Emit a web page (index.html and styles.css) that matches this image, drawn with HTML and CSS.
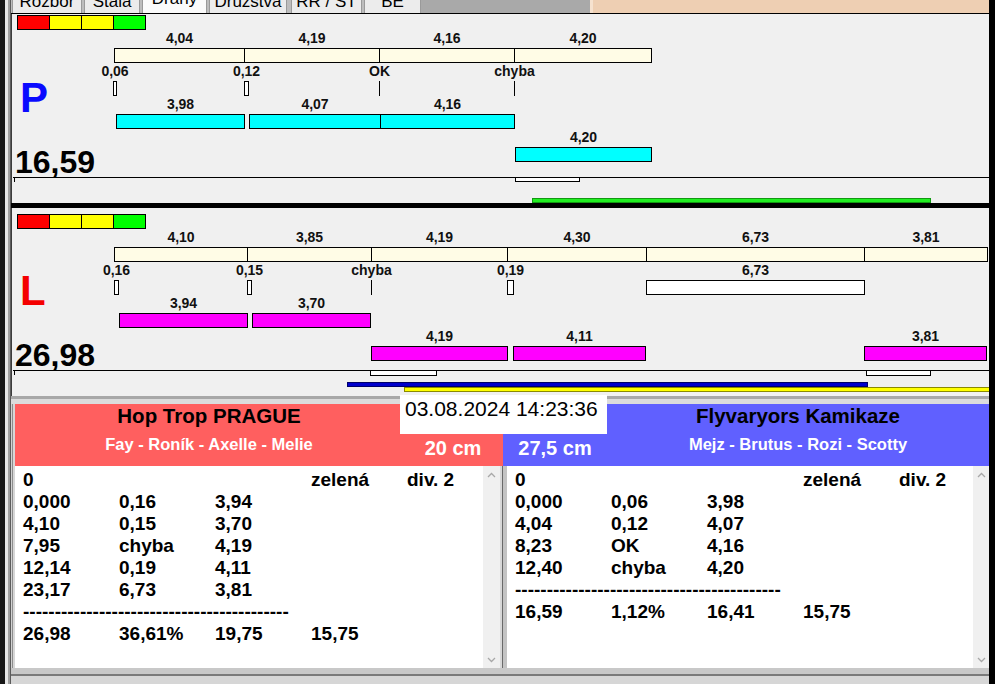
FILE: index.html
```html
<!DOCTYPE html>
<html lang="cs">
<head>
<meta charset="utf-8">
<title>Dráhy</title>
<link rel="stylesheet" href="styles.css">
</head>
<body>
<div class="screen">
  <div class="edge-left"></div>
  <div class="main">
    <nav class="tabbar">
      <div class="tab tab-1"><span>Rozbor</span></div>
      <div class="tab tab-2"><span>Stala</span></div>
      <div class="tab tab-3 tab-on"><span>Dráhy</span></div>
      <div class="tab tab-4"><span>Družstva</span></div>
      <div class="tab tab-5"><span>RR / ST</span></div>
      <div class="tab tab-6"><span>BE</span></div>
      <div class="tab-gap"></div>
      <div class="tab-fill"></div>
    </nav>

    <section class="lane lane-p">
      <div class="legend"><span class="lg lg-red"></span><span class="lg lg-yellow"></span><span class="lg lg-yellow"></span><span class="lg lg-green"></span></div>
      <div class="timeline">
        <div class="side">
          <div class="letter letter-p">P</div>
          <div class="total">16,59</div>
        </div>
        <div class="tracks">
          <div class="track">
            <div class="item" style="left:0px;width:131px"><span class="lbl">4,04</span><span class="bar bar-cream"></span></div>
            <div class="item" style="left:130px;width:136px"><span class="lbl">4,19</span><span class="bar bar-cream"></span></div>
            <div class="item" style="left:265px;width:136px"><span class="lbl">4,16</span><span class="bar bar-cream"></span></div>
            <div class="item" style="left:400px;width:138px"><span class="lbl">4,20</span><span class="bar bar-cream"></span></div>
          </div>
          <div class="track">
            <div class="item" style="left:-1px;width:4px"><span class="lbl">0,06</span><span class="bar bar-gap"></span></div>
            <div class="item" style="left:130px;width:5px"><span class="lbl">0,12</span><span class="bar bar-gap"></span></div>
            <div class="item" style="left:265px;width:1px"><span class="lbl">OK</span><span class="bar bar-line"></span></div>
            <div class="item" style="left:400px;width:1px"><span class="lbl">chyba</span><span class="bar bar-line"></span></div>
          </div>
          <div class="track">
            <div class="item" style="left:2px;width:129px"><span class="lbl">3,98</span><span class="bar bar-cyan"></span></div>
            <div class="item" style="left:135px;width:132px"><span class="lbl">4,07</span><span class="bar bar-cyan"></span></div>
            <div class="item" style="left:266px;width:135px"><span class="lbl">4,16</span><span class="bar bar-cyan"></span></div>
          </div>
          <div class="track">
            <div class="item" style="left:401px;width:137px"><span class="lbl">4,20</span><span class="bar bar-cyan"></span></div>
          </div>
        </div>
      </div>
      <div class="base">
        <span class="base-line"></span>
        <span class="tick"></span>
        <span class="run run-white" style="left:503px;width:65px"></span>
        <span class="run run-green" style="left:520px;width:399px"></span>
      </div>
    </section>

    <div class="lane-sep"></div>

    <section class="lane lane-l">
      <div class="legend"><span class="lg lg-red"></span><span class="lg lg-yellow"></span><span class="lg lg-yellow"></span><span class="lg lg-green"></span></div>
      <div class="timeline">
        <div class="side">
          <div class="letter letter-l">L</div>
          <div class="total">26,98</div>
        </div>
        <div class="tracks">
          <div class="track">
            <div class="item" style="left:0px;width:134px"><span class="lbl">4,10</span><span class="bar bar-cream"></span></div>
            <div class="item" style="left:133px;width:125px"><span class="lbl">3,85</span><span class="bar bar-cream"></span></div>
            <div class="item" style="left:257px;width:137px"><span class="lbl">4,19</span><span class="bar bar-cream"></span></div>
            <div class="item" style="left:393px;width:140px"><span class="lbl">4,30</span><span class="bar bar-cream"></span></div>
            <div class="item" style="left:532px;width:219px"><span class="lbl">6,73</span><span class="bar bar-cream"></span></div>
            <div class="item" style="left:750px;width:124px"><span class="lbl">3,81</span><span class="bar bar-cream"></span></div>
          </div>
          <div class="track">
            <div class="item" style="left:0px;width:5px"><span class="lbl">0,16</span><span class="bar bar-gap"></span></div>
            <div class="item" style="left:133px;width:5px"><span class="lbl">0,15</span><span class="bar bar-gap"></span></div>
            <div class="item" style="left:257px;width:1px"><span class="lbl">chyba</span><span class="bar bar-line"></span></div>
            <div class="item" style="left:393px;width:7px"><span class="lbl">0,19</span><span class="bar bar-gap"></span></div>
            <div class="item" style="left:532px;width:219px"><span class="lbl">6,73</span><span class="bar bar-gap"></span></div>
          </div>
          <div class="track">
            <div class="item" style="left:5px;width:129px"><span class="lbl">3,94</span><span class="bar bar-magenta"></span></div>
            <div class="item" style="left:138px;width:119px"><span class="lbl">3,70</span><span class="bar bar-magenta"></span></div>
          </div>
          <div class="track">
            <div class="item" style="left:257px;width:137px"><span class="lbl">4,19</span><span class="bar bar-magenta"></span></div>
            <div class="item" style="left:399px;width:133px"><span class="lbl">4,11</span><span class="bar bar-magenta"></span></div>
            <div class="item" style="left:750px;width:123px"><span class="lbl">3,81</span><span class="bar bar-magenta"></span></div>
          </div>
        </div>
      </div>
      <div class="base">
        <span class="base-line"></span>
        <span class="tick"></span>
        <span class="run run-white run-tall" style="left:358px;width:67px"></span>
        <span class="run run-white run-tall" style="left:854px;width:65px"></span>
        <span class="run run-blue" style="left:335px;width:521px"></span>
        <span class="run run-yellow" style="left:392px;width:585px"></span>
      </div>
    </section>

    <section class="info">
      <div class="info-top"></div>
      <div class="date">03.08.2024 14:23:36</div>
      <div class="heads">
        <div class="head head-red">
          <div class="names">
            <div class="team-name">Hop Trop PRAGUE</div>
            <div class="dogs">Fay - Roník - Axelle - Melie</div>
          </div>
          <div class="height">20 cm</div>
        </div>
        <div class="head head-blue">
          <div class="height">27,5 cm</div>
          <div class="names">
            <div class="team-name">Flyvaryors Kamikaze</div>
            <div class="dogs">Mejz - Brutus - Rozi - Scotty</div>
          </div>
        </div>
      </div>
      <div class="lists">
        <div class="list">
          <div class="list-body">
            <div class="row"><span>0</span><span></span><span></span><span>zelená</span><span>div. 2</span></div>
            <div class="row"><span>0,000</span><span>0,16</span><span>3,94</span></div>
            <div class="row"><span>4,10</span><span>0,15</span><span>3,70</span></div>
            <div class="row"><span>7,95</span><span>chyba</span><span>4,19</span></div>
            <div class="row"><span>12,14</span><span>0,19</span><span>4,11</span></div>
            <div class="row"><span>23,17</span><span>6,73</span><span>3,81</span></div>
            <div class="row"><span class="dash">------------------------------------------</span></div>
            <div class="row"><span>26,98</span><span>36,61%</span><span>19,75</span><span>15,75</span></div>
          </div>
          <div class="scroll scroll-l">
            <svg class="arrow" width="9" height="6" viewBox="0 0 9 6"><path d="M1 5 L4.5 1.5 L8 5" fill="none" stroke="#a8a8a8" stroke-width="1.3"/></svg>
            <svg class="arrow" width="9" height="6" viewBox="0 0 9 6"><path d="M1 1 L4.5 4.5 L8 1" fill="none" stroke="#a8a8a8" stroke-width="1.3"/></svg>
          </div>
        </div>
        <div class="list-sep"></div>
        <div class="list">
          <div class="list-body">
            <div class="row"><span>0</span><span></span><span></span><span>zelená</span><span>div. 2</span></div>
            <div class="row"><span>0,000</span><span>0,06</span><span>3,98</span></div>
            <div class="row"><span>4,04</span><span>0,12</span><span>4,07</span></div>
            <div class="row"><span>8,23</span><span>OK</span><span>4,16</span></div>
            <div class="row"><span>12,40</span><span>chyba</span><span>4,20</span></div>
            <div class="row"><span class="dash">------------------------------------------</span></div>
            <div class="row"><span>16,59</span><span>1,12%</span><span>16,41</span><span>15,75</span></div>
          </div>
          <div class="scroll scroll-r">
            <svg class="arrow" width="9" height="6" viewBox="0 0 9 6"><path d="M1 5 L4.5 1.5 L8 5" fill="none" stroke="#a8a8a8" stroke-width="1.3"/></svg>
            <svg class="arrow" width="9" height="6" viewBox="0 0 9 6"><path d="M1 1 L4.5 4.5 L8 1" fill="none" stroke="#a8a8a8" stroke-width="1.3"/></svg>
          </div>
        </div>
      </div>
      <div class="info-bottom"></div>
    </section>
  </div>
  <div class="edge-right"></div>
</div>
</body>
</html>
```

FILE: styles.css
```css
html, body {
  margin: 0;
  padding: 0;
}
body {
  width: 995px;
  height: 684px;
  overflow: hidden;
  background: #f0f0f0;
  font-family: "Liberation Sans", Arial, sans-serif;
  color: #000;
}
.screen {
  display: flex;
  width: 995px;
  height: 684px;
}
.edge-left {
  flex: none;
  width: 11px;
  background: linear-gradient(to right, #161616 0 5px, #e6e6e6 5px 8px, #a0a0a0 8px 10px, #5c5c5c 10px 11px);
}
.edge-right {
  flex: none;
  width: 6px;
  background: #000;
}
.main {
  flex: none;
  width: 978px;
  display: flex;
  flex-direction: column;
}

/* tabs */
.tabbar {
  flex: none;
  height: 13px;
  border-bottom: 1px solid #000;
  display: flex;
  padding-left: 1px;
  background: #bdbdbd;
  overflow: hidden;
}
.tab {
  box-sizing: border-box;
  height: 13px;
  border-left: 1px solid #9a9a9a;
  border-right: 1px solid #9a9a9a;
  background: #ececec;
  font-size: 17px;
  line-height: 17px;
  text-align: center;
  overflow: hidden;
  margin-right: 2px;
  white-space: nowrap;
}
.tab span {
  display: block;
  margin-top: -7px;
}
.tab-on {
  background: #fbfbfb;
}
.tab-on span {
  margin-top: -10px;
}
.tab-1 { width: 70px; }
.tab-2 { width: 56px; }
.tab-3 { width: 65px; }
.tab-4 { width: 78px; margin-right: 4px; }
.tab-5 { width: 71px; }
.tab-6 { width: 57px; margin-right: 0; }
.tab-gap {
  width: 169px;
  background: #a9a9a9;
}
.tab-fill {
  flex: 1;
  background: #eecfb3;
  border-left: 3px solid #f6e2cf;
}

/* lanes */
.lane {
  flex: none;
  box-sizing: border-box;
  background: #f0f0f0;
  border-left: 1px solid #3c3c3c;
  display: flex;
  flex-direction: column;
}
.lane-p {
  height: 189px;
  padding-top: 1px;
}
.lane-l {
  height: 188px;
  padding-top: 6px;
}
.lane-sep {
  flex: none;
  height: 5px;
  background: #000;
}
.legend {
  display: flex;
  width: max-content;
  height: 15px;
  box-sizing: border-box;
  margin-left: 5px;
  border: 1px solid #000;
  border-right: none;
}
.lg {
  width: 31px;
  border-right: 1px solid #000;
}
.lg-red { background: #ff0000; }
.lg-yellow { background: #ffff00; }
.lg-green { background: #00ff00; }

.timeline {
  display: grid;
  grid-template-columns: 102px 1fr;
}
.lane-p .timeline { height: 147px; }
.lane-l .timeline { height: 141px; }
.side {
  display: flex;
  flex-direction: column;
  justify-content: flex-end;
}
.letter {
  font-size: 42px;
  font-weight: bold;
  line-height: 42px;
  margin-left: 8px;
}
.letter-p { color: #0a0aff; }
.letter-l { color: #f40000; }
.total {
  font-size: 32px;
  font-weight: bold;
  line-height: 30px;
  margin-top: 28px;
  margin-left: 3px;
}
.tracks {
  display: flex;
  flex-direction: column;
}
.track {
  position: relative;
  height: 33px;
}
.item {
  position: absolute;
  top: 0;
  display: flex;
  flex-direction: column;
  align-items: center;
}
.lbl {
  height: 16px;
  line-height: 16px;
  margin-bottom: 2px;
  font-size: 14px;
  font-weight: bold;
  white-space: nowrap;
  color: #111;
}
.bar {
  align-self: stretch;
  height: 15px;
  box-sizing: border-box;
  border: 1px solid #000;
}
.bar-cream { background: #fffce6; }
.bar-cyan { background: #00ffff; }
.bar-magenta { background: #ff00ff; }
.bar-gap { background: #ffffff; }
.bar-line { background: #000; border: none; }

.base {
  position: relative;
  height: 26px;
}
.base-line {
  position: absolute;
  left: 1px;
  right: 0;
  top: 0;
  height: 1px;
  background: #000;
}
.tick {
  position: absolute;
  left: 2px;
  top: 0;
  width: 1px;
  height: 5px;
  background: #000;
}
.run {
  position: absolute;
  box-sizing: border-box;
  height: 5px;
}
.run-white {
  top: 0;
  background: #fff;
  border: 1px solid #000;
}
.run-tall { height: 6px; }
.run-green {
  top: 21px;
  background: #22ee22;
  border: 1px solid #129a12;
}
.run-blue {
  top: 12px;
  background: #0000cc;
  border: 1px solid #00006a;
}
.run-yellow {
  top: 17px;
  background: #ffff00;
  border: 1px solid #8a8a00;
  border-right: none;
}

/* info */
.info {
  flex: none;
  position: relative;
  height: 288px;
  display: flex;
  flex-direction: column;
  background: linear-gradient(to right, #d2d2d2 0 1px, #8c8c8c 1px 2px, #d6d6d6 2px);
}
.info-top {
  height: 8px;
  background: linear-gradient(#a8a8a8 0 3px, #dcdcdc 3px);
}
.date {
  position: absolute;
  left: 389px;
  top: -1px;
  width: 207px;
  height: 39px;
  box-sizing: border-box;
  padding: 2px 0 0 5px;
  background: #fff;
  font-size: 21px;
  line-height: 24px;
  white-space: nowrap;
}
.heads {
  display: grid;
  grid-template-columns: 488px 486px;
  height: 62px;
  margin-left: 4px;
}
.head {
  display: grid;
}
.head-red {
  background: #ff5f5f;
  grid-template-columns: 388px 100px;
}
.head-blue {
  background: #6060ff;
  grid-template-columns: 104px 382px;
}
.names {
  display: flex;
  flex-direction: column;
  align-items: center;
  white-space: nowrap;
}
.team-name {
  font-size: 20.5px;
  font-weight: bold;
  line-height: 24px;
  color: #000;
}
.dogs {
  margin-top: 6px;
  font-size: 16.5px;
  font-weight: bold;
  line-height: 20px;
  color: #fff;
}
.height {
  padding-top: 32px;
  font-size: 20px;
  font-weight: bold;
  line-height: 24px;
  color: #fff;
  text-align: center;
  white-space: nowrap;
}
.lists {
  display: grid;
  grid-template-columns: 485px 7px 482px;
  height: 202px;
  margin-left: 4px;
}
.list {
  display: flex;
  min-width: 0;
  background: #fff;
}
.list-body {
  flex: 1;
  min-width: 0;
  overflow: hidden;
  padding: 3px 0 0 8px;
  font-size: 19px;
  font-weight: bold;
}
.row {
  display: grid;
  grid-template-columns: repeat(5, 96px);
  height: 22px;
  line-height: 22px;
  white-space: nowrap;
}
.dash {
  grid-column: 1 / -1;
  overflow: hidden;
}
.scroll {
  flex: none;
  display: flex;
  flex-direction: column;
  justify-content: space-between;
  align-items: center;
  padding: 6px 0 5px;
  background: #f0f0f0;
}
.scroll-l { width: 17px; }
.scroll-r { width: 16px; }
.arrow { display: block; }
.list-sep {
  background: linear-gradient(to right, #d8d8d8 0 2px, #6a6a6a 2px 3px, #c4c4c4 3px);
}
.info-bottom {
  height: 16px;
  background: linear-gradient(#c8c8c8 0 6px, #7a7a7a 6px 8px, #d6d6d6 8px);
}
```
